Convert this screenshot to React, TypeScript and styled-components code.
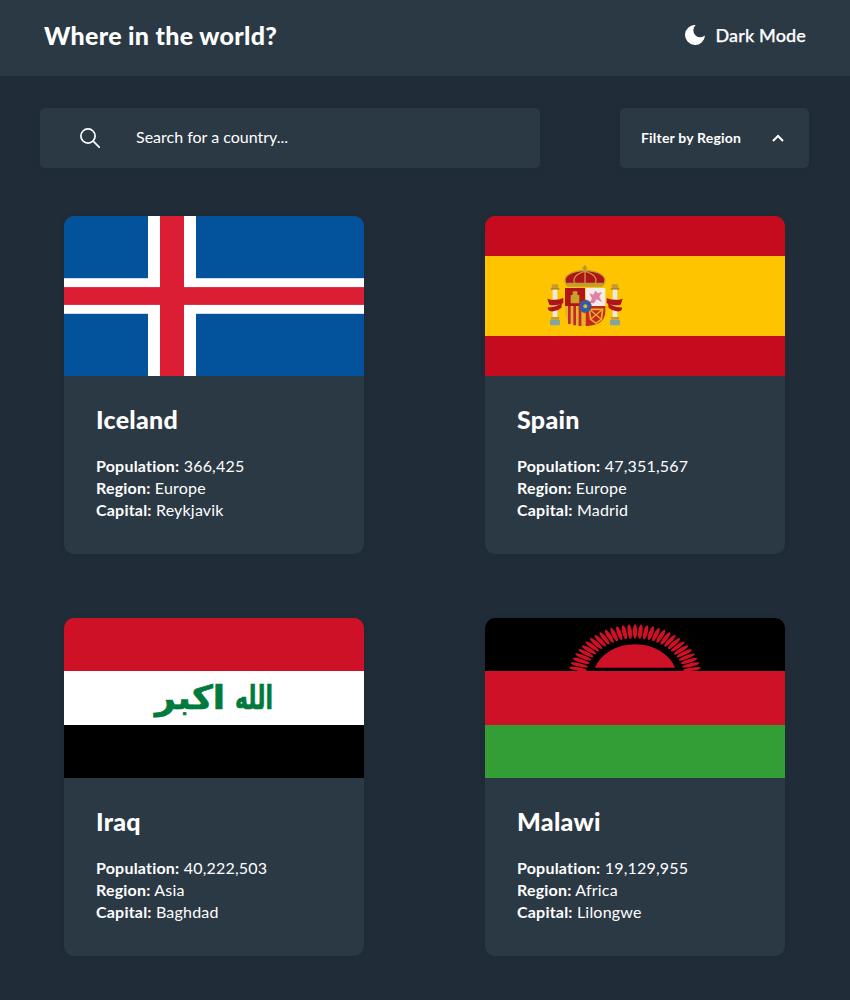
import React from "react";
import styled, { createGlobalStyle } from "styled-components";

const Global = createGlobalStyle`
  html, body { margin: 0; padding: 0; background: #202c37; }
  body { font-family: "Lato", "Liberation Sans", sans-serif; color: #fff; }
`;

const Page = styled.div`
  width: 850px;
  height: 1000px;
  overflow: hidden;
  background: #202c37;
`;
const Header = styled.header`
  height: 76px;
  background: #2b3945;
  display: flex;
  align-items: center;
  justify-content: space-between;
  padding: 0 44px 6px 44px;
  box-sizing: border-box;
`;
const Title = styled.h1`
  margin: 0;
  font-size: 25px;
  letter-spacing: 0.3px;
  font-weight: 900;
  line-height: 32px;
`;
const ThemeToggle = styled.div`
  display: flex;
  align-items: center;
  gap: 10px;
  font-size: 18px;
  letter-spacing: 0.15px;
  font-weight: 500;
  -webkit-text-stroke: 0.25px #fff;
`;
const Controls = styled.div`
  display: flex;
  justify-content: space-between;
  padding: 32px 41px 48px 40px;
`;
const Search = styled.div`
  width: 500px;
  height: 60px;
  background: #2b3945;
  border-radius: 5px;
  box-shadow: 0 2px 9px rgba(0, 0, 0, 0.05);
  display: flex;
  align-items: center;
  padding-left: 40px;
  box-sizing: border-box;
  gap: 36px;
  font-size: 16px;
`;
const SearchText = styled.span`
  padding-bottom: 3px;
`;
const Filter = styled.div`
  width: 189px;
  height: 60px;
  background: #2b3945;
  border-radius: 5px;
  box-shadow: 0 2px 9px rgba(0, 0, 0, 0.05);
  display: flex;
  align-items: center;
  justify-content: space-between;
  padding: 0 25px 0 21px;
  box-sizing: border-box;
  font-size: 14px;
  letter-spacing: 0.2px;
  font-weight: 700;
`;
const FilterText = styled.span`
  padding-bottom: 1px;
`;
const Grid = styled.main`
  display: grid;
  grid-template-columns: 300px 300px;
  column-gap: 121px;
  row-gap: 64px;
  padding-left: 64px;
`;
const Card = styled.article`
  width: 300px;
  height: 338px;
  background: #2b3945;
  border-radius: 10px;
  overflow: hidden;
  box-shadow: 0 0 7px rgba(0, 0, 0, 0.06);
`;
const FlagSvg = styled.svg`
  display: block;
  width: 300px;
  height: 160px;
`;
const Body = styled.div`
  padding: 27px 32px 0 32px;
`;
const Name = styled.h2`
  margin: 0 0 20px;
  font-size: 25px;
  letter-spacing: 0.3px;
  line-height: 32px;
  font-weight: 900;
`;
const Line = styled.p`
  margin: 0;
  font-size: 16px;
  letter-spacing: 0.2px;
  line-height: 22px;
  font-weight: 400;
  b { font-weight: 700; }
`;
const ArabicText = styled.text`
  font-family: "DejaVu Sans", sans-serif;
  font-weight: 700;
  font-size: 33px;
  fill: #007a3d;
  stroke: #007a3d;
  stroke-width: 0.7px;
`;

const Iceland = () => (
  <FlagSvg viewBox="0 0 300 160">
    <rect width="300" height="160" fill="#02529c" />
    <rect x="84" width="48" height="160" fill="#fff" />
    <rect y="62.2" width="300" height="35.6" fill="#fff" />
    <rect x="96" width="24" height="160" fill="#dc1e35" />
    <rect y="71.1" width="300" height="17.8" fill="#dc1e35" />
  </FlagSvg>
);

const Pillar = ({ x }: { x: number }) => (
  <g>
    <rect x={x + 3} y="85" width="20" height="14" rx="4" fill="#c39a34" />
    <rect x={x} y="97" width="26" height="4" fill="#9b7b2a" />
    <rect x={x + 6} y="101" width="14" height="82" fill="#ece9e2" />
    <rect x={x + 1} y="183" width="24" height="8" fill="#c39a34" />
    <rect x={x - 2} y="191" width="30" height="17" rx="4" fill="#7fa7a0" />
  </g>
);

const Spain = () => (
  <FlagSvg viewBox="0 0 300 160">
    <rect width="300" height="160" fill="#c60b1e" />
    <rect y="40" width="300" height="80" fill="#ffc400" />
    <g transform="translate(45 40) scale(0.3333)">
      <Pillar x={62} />
      <Pillar x={242} />
      <path d="M52 128 Q75 136 100 126 L100 142 Q76 152 58 146 Z" fill="#ad1519" />
      <path d="M70 166 Q52 168 54 154 Q72 156 96 142 L94 156 Q84 164 70 166 Z" fill="#ad1519" />
      <path d="M278 128 Q255 136 230 126 L230 142 Q254 152 272 146 Z" fill="#ad1519" />
      <path d="M260 166 Q278 168 276 154 Q258 156 234 142 L236 156 Q246 164 260 166 Z" fill="#ad1519" />
      <rect x="161" y="28" width="7" height="18" fill="#b8942a" />
      <rect x="157" y="34" width="15" height="5" fill="#b8942a" />
      <path d="M112 88 C88 60 130 44 165 44 C200 44 242 60 218 88 Z" fill="#ad1519" stroke="#c39a34" strokeWidth="4" />
      <path d="M136 84 C124 68 140 52 165 46 C190 52 206 68 194 84 M165 46 V84" fill="none" stroke="#c39a34" strokeWidth="4" />
      <rect x="110" y="80" width="110" height="12" rx="4" fill="#c39a34" />
      <path d="M105 96 H165 V150 H105 Z" fill="#ad1519" />
      <path d="M167 96 H226 V150 H167 Z" fill="#f1ede8" />
      <path d="M105 150 H165 V210 C135 210 105 200 105 165 Z" fill="#e6b02c" />
      <path d="M114 150 h8 v54 h-8 Z M130 150 h8 v58 h-8 Z M146 150 h8 v60 h-8 Z" fill="#bd2b2b" />
      <path d="M167 150 H226 V165 C226 200 196 210 167 210 Z" fill="#c5281f" />
      <path d="M178 160 L218 160 L214 190 L198 202 L182 190 Z" fill="none" stroke="#e6b02c" strokeWidth="5" />
      <path d="M178 160 L214 190 M218 160 L182 190" stroke="#e6b02c" strokeWidth="4" />
      <path d="M122 142 V118 L128 116 V106 H142 V116 L148 118 V142 Z" fill="#c9a227" />
      <path d="M178 140 L186 128 L178 112 L190 116 L196 104 L204 112 L216 108 L208 122 L216 138 L200 130 L192 142 Z" fill="#e07fa8" />
      <ellipse cx="166" cy="151" rx="18" ry="19" fill="#2a5ea8" stroke="#a33" strokeWidth="2" />
      <circle cx="166" cy="151" r="6" fill="#d9b13c" />
    </g>
  </FlagSvg>
);

const Iraq = () => (
  <FlagSvg viewBox="0 0 300 160">
    <rect width="300" height="53" fill="#ce1126" />
    <rect y="53" width="300" height="54" fill="#fff" />
    <rect y="107" width="300" height="53" fill="#000" />
    <ArabicText x="190" y="91" textAnchor="middle" direction="rtl" textLength="38" lengthAdjust="spacingAndGlyphs">
      الله
    </ArabicText>
    <ArabicText x="126" y="91" textAnchor="middle" direction="rtl" textLength="70" lengthAdjust="spacingAndGlyphs">
      اكبر
    </ArabicText>
  </FlagSvg>
);

const rays = Array.from({ length: 31 }, (_, i) => -79 + i * 5.27);

const Malawi = () => (
  <FlagSvg viewBox="0 0 300 160">
    <rect width="300" height="53" fill="#000" />
    <rect y="53" width="300" height="54" fill="#ce1126" />
    <rect y="107" width="300" height="53" fill="#339e35" />
    <path d="M110 49.7 A42 33.6 0 0 1 190 49.7 Z" fill="#ce1126" />
    <g transform="translate(150 59.9) scale(1 0.8)">
      {rays.map((a) => (
        <ellipse key={a} cx="0" cy="-58" rx="2.2" ry="9" fill="#ce1126" transform={`rotate(${a})`} />
      ))}
    </g>
  </FlagSvg>
);

const countries = [
  { name: "Iceland", pop: "366,425", region: "Europe", capital: "Reykjavik", Flag: Iceland },
  { name: "Spain", pop: "47,351,567", region: "Europe", capital: "Madrid", Flag: Spain },
  { name: "Iraq", pop: "40,222,503", region: "Asia", capital: "Baghdad", Flag: Iraq },
  { name: "Malawi", pop: "19,129,955", region: "Africa", capital: "Lilongwe", Flag: Malawi },
];

export default function App() {
  return (
    <Page>
      <Global />
      <Header>
        <Title>Where in the world?</Title>
        <ThemeToggle>
          <svg width="20" height="20" viewBox="0 0 20 20">
            <path d="M10.7 0 A10 10 0 1 0 20 10.5 A7 7 0 0 1 10.7 0 Z" fill="#fff" />
          </svg>
          Dark Mode
        </ThemeToggle>
      </Header>
      <Controls>
        <Search>
          <svg width="20" height="20" viewBox="0 0 20 20" fill="none" stroke="#fff" strokeWidth="1.7">
            <circle cx="8" cy="8" r="7.1" />
            <path d="M13.2 13.2 L19.4 19.4" strokeLinecap="round" />
          </svg>
          <SearchText>Search for a country...</SearchText>
        </Search>
        <Filter>
          <FilterText>Filter by Region</FilterText>
          <svg width="12" height="8" viewBox="0 0 12 8" fill="none" stroke="#fff" strokeWidth="2">
            <path d="M1 7 L6 2 L11 7" />
          </svg>
        </Filter>
      </Controls>
      <Grid>
        {countries.map(({ name, pop, region, capital, Flag }) => (
          <Card key={name}>
            <Flag />
            <Body>
              <Name>{name}</Name>
              <Line><b>Population:</b> {pop}</Line>
              <Line><b>Region:</b> {region}</Line>
              <Line><b>Capital:</b> {capital}</Line>
            </Body>
          </Card>
        ))}
      </Grid>
    </Page>
  );
}
